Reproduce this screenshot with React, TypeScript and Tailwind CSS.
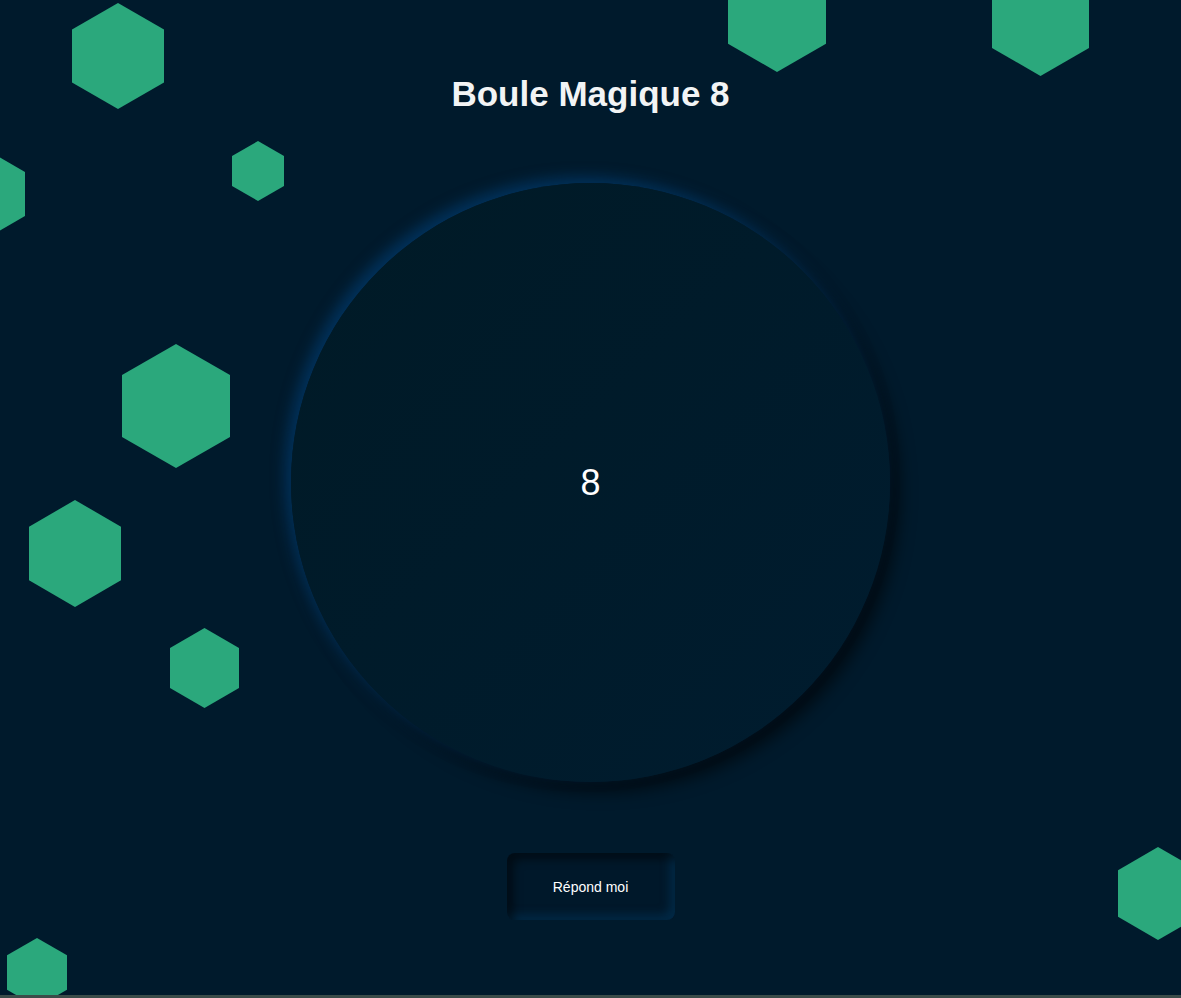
import React from 'react';

const hexes = [
  { left: 72, top: 3, w: 92, h: 106 },
  { left: 728, top: -41, w: 98, h: 113 },
  { left: 992, top: -36, w: 97, h: 112 },
  { left: -51, top: 150, w: 76, h: 88 },
  { left: 232, top: 141, w: 52, h: 60 },
  { left: 122, top: 344, w: 108, h: 124 },
  { left: 29, top: 500, w: 92, h: 107 },
  { left: 170, top: 628, w: 69, h: 80 },
  { left: 1118, top: 847, w: 80, h: 93 },
  { left: 7, top: 938, w: 60, h: 69 },
];

const Hexagon = ({ left, top, w, h }: { left: number; top: number; w: number; h: number }) => (
  <div
    className="absolute bg-[#2ba87c] [clip-path:polygon(50%_0,100%_25%,100%_75%,50%_100%,0_75%,0_25%)]"
    style={{ left, top, width: w, height: h }}
  />
);

const App: React.FC = () => {
  return (
    <div className="w-full h-[998px] flex flex-col bg-[#3b4c49] font-['Liberation_Sans',Arial,sans-serif]">
      <main className="relative h-[995px] overflow-hidden bg-[#001a2c] flex flex-col items-center">
        {hexes.map((h, i) => (
          <Hexagon key={i} {...h} />
        ))}

        <h1 className="relative mt-[74px] text-[35px] leading-[40px] font-bold text-[#f2f4f5]">
          Boule Magique 8
        </h1>

        <div className="relative mt-[69px] w-[599px] h-[599px] rounded-full bg-gradient-to-br from-[#001a26] to-[#001c2f] shadow-[-6px_-6px_14px_rgba(0,70,130,0.55),10px_10px_16px_rgba(0,0,0,0.55)] flex items-center justify-center">
          <span className="text-[36px] leading-none text-white">8</span>
        </div>

        <button className="relative mt-[71px] w-[168px] h-[67px] rounded-lg bg-[#00182a] shadow-[inset_6px_6px_10px_rgba(0,0,0,0.5),inset_-5px_-5px_10px_rgba(0,60,100,0.5)] text-white text-[14px] pt-[2px]">
          Répond moi
        </button>
      </main>
    </div>
  );
};

export default App;
